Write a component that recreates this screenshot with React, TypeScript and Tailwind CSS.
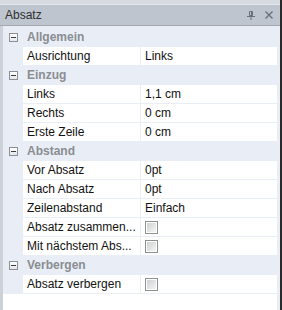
import React from 'react';

type Row =
  | { kind: 'cat'; label: string }
  | { kind: 'prop'; label: string; value?: string; check?: boolean };

const rows: Row[] = [
  { kind: 'cat', label: 'Allgemein' },
  { kind: 'prop', label: 'Ausrichtung', value: 'Links' },
  { kind: 'cat', label: 'Einzug' },
  { kind: 'prop', label: 'Links', value: '1,1 cm' },
  { kind: 'prop', label: 'Rechts', value: '0 cm' },
  { kind: 'prop', label: 'Erste Zeile', value: '0 cm' },
  { kind: 'cat', label: 'Abstand' },
  { kind: 'prop', label: 'Vor Absatz', value: '0pt' },
  { kind: 'prop', label: 'Nach Absatz', value: '0pt' },
  { kind: 'prop', label: 'Zeilenabstand', value: 'Einfach' },
  { kind: 'prop', label: 'Absatz zusammen...', check: true },
  { kind: 'prop', label: 'Mit nächstem Abs...', check: true },
  { kind: 'cat', label: 'Verbergen' },
  { kind: 'prop', label: 'Absatz verbergen', check: true },
];

const Expander: React.FC = () => (
  <div className="w-[9px] h-[9px] border border-[#8c8f95] bg-gradient-to-b from-white to-[#e4e7ec] flex items-center justify-center">
    <div className="w-[5px] h-px bg-[#3c3c3c]" />
  </div>
);

const CheckBox: React.FC = () => (
  <div className="w-[13px] h-[13px] border border-[#8e8f8f] bg-white p-px">
    <div className="w-full h-full bg-gradient-to-br from-[#cfd0d2] to-[#f5f5f5]" />
  </div>
);

const PinIcon: React.FC = () => (
  <svg width="8" height="9" viewBox="0 0 8 9" className="text-[#6b6f77]">
    <path d="M2.5 0.5h3v4h-3z M4.5 0.5v4" fill="none" stroke="currentColor" />
    <path d="M0 5.5h8 M4 5.5v3.5" fill="none" stroke="currentColor" />
  </svg>
);

const CloseIcon: React.FC = () => (
  <svg width="8" height="8" viewBox="0 0 8 8" className="text-[#6b6f77]">
    <path d="M0.5 0.5l7 7 M7.5 0.5l-7 7" fill="none" stroke="currentColor" strokeWidth="1.4" />
  </svg>
);

const App: React.FC = () => {
  return (
    <div
      className="w-[282px] h-[310px] flex bg-[#d6dae1] text-[12px] overflow-hidden"
      style={{ fontFamily: '"Liberation Sans", Arial, sans-serif' }}
    >
      <div className="w-[280px] flex flex-col">
        <div className="h-[4px] bg-[#d6dae1]" />
        <div className="h-[22px] flex items-center pl-[5px] pr-[7px] bg-[#bec5cf] border-t border-[#e4e7ec] border-b border-b-[#a2a9b3] text-[#2e2e2e]">
          <span className="flex-1">Absatz</span>
          <div className="flex items-center gap-[10px]">
            <PinIcon />
            <CloseIcon />
          </div>
        </div>
        <div className="flex-1 flex flex-col bg-[#e9edf5] border-l-[3px] border-[#cdd1d8] pt-[2px] pr-[3px]">
          {rows.map((r) =>
            r.kind === 'cat' ? (
              <div key={r.label} className="h-[19px] flex border-b border-[#e9edf5]">
                <div className="w-[20px] flex items-center justify-center pl-px">
                  <Expander />
                </div>
                <div className="flex-1 flex items-center pl-[4px] font-bold text-[#8a8d92]">
                  {r.label}
                </div>
              </div>
            ) : (
              <div key={r.label} className="h-[19px] flex border-b border-[#e9edf5]">
                <div className="w-[20px]" />
                <div className="w-[117px] bg-white flex items-center pl-[4px] text-[#111] whitespace-nowrap overflow-hidden">
                  {r.label}
                </div>
                <div className="w-px" />
                <div className="flex-1 bg-white flex items-center pl-[4px] text-[#111]">
                  {r.check ? <CheckBox /> : r.value}
                </div>
              </div>
            )
          )}
          <div className="flex-1 bg-white" />
        </div>
      </div>
      <div className="w-[2px] bg-[#2a2a2a]" />
    </div>
  );
};

export default App;
